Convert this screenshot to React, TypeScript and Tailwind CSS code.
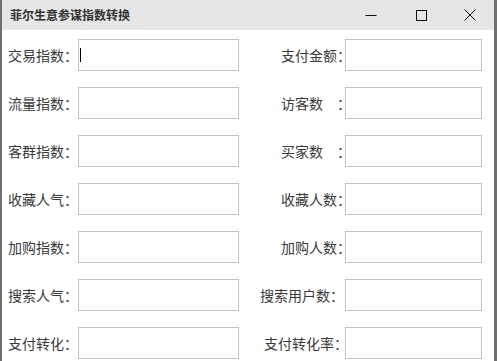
const fields: [string, string, string][] = [
  ['交易指数：', '支付金额：', 'mr-[-6px]'],
  ['流量指数：', '访客数　：', 'mr-[-6px]'],
  ['客群指数：', '买家数　：', 'mr-[-6px]'],
  ['收藏人气：', '收藏人数：', 'mr-[-6px]'],
  ['加购指数：', '加购人数：', 'mr-[-6px]'],
  ['搜索人气：', '搜索用户数：', 'mr-[1px]'],
  ['支付转化：', '支付转化率：', 'mr-[-3px]'],
];

const font = { fontFamily: '"Noto Sans CJK SC", "Microsoft YaHei", sans-serif' };

const Box = ({ className, caret }: { className: string; caret?: boolean }) => (
  <div className={`h-[32px] border border-[#c4c4c4] bg-white flex items-center ${className}`}>
    {caret && <span className="ml-[1px] block w-[1px] h-[14px] bg-black" />}
  </div>
);

const App = () => {
  return (
    <div
      className="w-[497px] h-[361px] overflow-hidden bg-white border-l-2 border-r-[3px] border-[#6f6f6f] flex flex-col"
      style={font}
    >
      <div className="h-[30px] shrink-0 bg-[#e6e6e6] flex items-center">
        <span className="pl-[8px] text-[12px] font-bold text-[#333]">菲尔生意参谋指数转换</span>
        <div className="ml-auto flex h-full">
          <div className="w-[50px] flex items-center justify-center">
            <svg width="12" height="12" viewBox="0 0 12 12">
              <path d="M0.5 6.5H11.5" stroke="#111" strokeWidth="1" />
            </svg>
          </div>
          <div className="w-[50px] flex items-center justify-center">
            <svg width="11" height="11" viewBox="0 0 11 11">
              <rect x="0.5" y="0.5" width="10" height="10" fill="none" stroke="#111" strokeWidth="1" />
            </svg>
          </div>
          <div className="w-[48px] flex items-center justify-center">
            <svg width="12" height="12" viewBox="0 0 12 12">
              <path d="M0.5 0.5L11.5 11.5M11.5 0.5L0.5 11.5" stroke="#111" strokeWidth="1" />
            </svg>
          </div>
        </div>
      </div>
      <div className="flex flex-col gap-[16px] pt-[9px]">
        {fields.map(([left, right, shift], i) => (
          <div key={left} className="flex items-center text-[14px] text-[#3a3a3a]">
            <label className="pl-[6px] w-[76px] whitespace-nowrap">{left}</label>
            <Box className="w-[161px]" caret={i === 0} />
            <label className="w-[106px] text-right whitespace-nowrap">
              <span className={shift}>{right}</span>
            </label>
            <Box className="w-[137px]" />
          </div>
        ))}
      </div>
    </div>
  );
};

export default App;
